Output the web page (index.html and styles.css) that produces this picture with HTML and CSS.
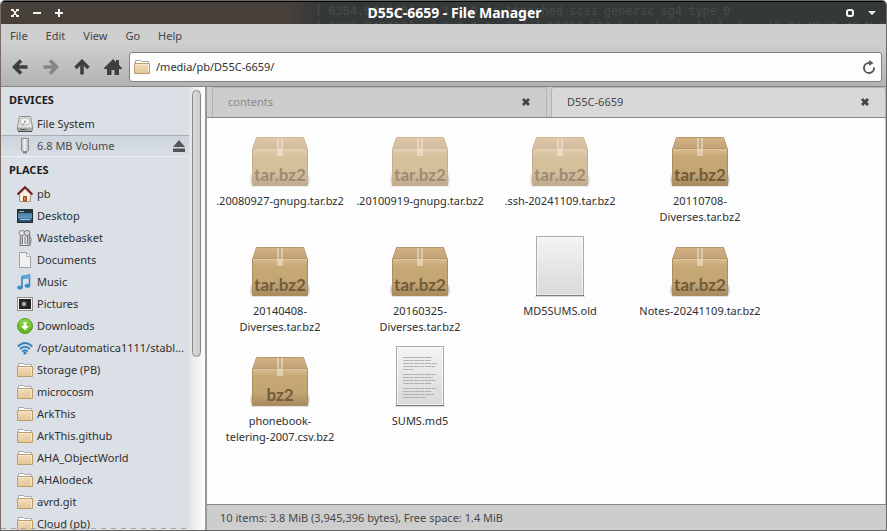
FILE: index.html
```html
<!DOCTYPE html>
<html lang="en">
<head>
<meta charset="utf-8">
<title>D55C-6659 - File Manager</title>
<link rel="stylesheet" href="styles.css">
</head>
<body>
<svg class="defs" width="0" height="0" aria-hidden="true">
  <defs>
    <linearGradient id="g-front" x1="0" y1="0" x2="0" y2="1"><stop offset="0" stop-color="#d6bb8d"/><stop offset=".2" stop-color="#c6a975"/><stop offset=".65" stop-color="#c3a572"/><stop offset="1" stop-color="#a68a5d"/></linearGradient>
    <linearGradient id="g-lid" x1="0" y1="0" x2="0" y2="1"><stop offset="0" stop-color="#d3b283"/><stop offset="1" stop-color="#c1a078"/></linearGradient>
    <linearGradient id="g-page" x1="0" y1="0" x2="0" y2="1"><stop offset="0" stop-color="#f3f3f3"/><stop offset="1" stop-color="#d9d9d9"/></linearGradient>
    <linearGradient id="g-folder" x1="0" y1="0" x2="0" y2="1"><stop offset="0" stop-color="#f0dcba"/><stop offset="1" stop-color="#e6c797"/></linearGradient>
    <linearGradient id="g-blue" x1="0" y1="0" x2="0" y2="1"><stop offset="0" stop-color="#2f6592"/><stop offset="1" stop-color="#83b7d8"/></linearGradient>
    <linearGradient id="g-green" x1="0" y1="0" x2="0" y2="1"><stop offset="0" stop-color="#8fd64c"/><stop offset="1" stop-color="#5cb01c"/></linearGradient>
    <linearGradient id="g-metal" x1="0" y1="0" x2="1" y2="0"><stop offset="0" stop-color="#a8a8a8"/><stop offset=".4" stop-color="#f4f4f4"/><stop offset="1" stop-color="#b4b4b4"/></linearGradient>
    <radialGradient id="g-shadow"><stop offset="0" stop-color="#000" stop-opacity=".4"/><stop offset="1" stop-color="#000" stop-opacity="0"/></radialGradient>
    <symbol id="box" viewBox="0 0 64 64">
      <ellipse cx="5" cy="56" rx="3.500" ry="8" fill="url(#g-shadow)"/>
      <ellipse cx="59" cy="56" rx="3.500" ry="8" fill="url(#g-shadow)"/>
      <path d="M5 62.500H59" stroke="#000" stroke-opacity=".1"/>
      <path d="M8.500 13.500H55.500L59.500 25.500H4.500Z" fill="url(#g-lid)" stroke="#b9976a"/>
      <path d="M4.500 25H59.500V61.500H4.500Z" fill="url(#g-front)" stroke="#b08d60"/>
      <path d="M5 25.500H59" stroke="#dcc59c"/>
      <path d="M32 14V25" stroke="#9c7f58"/>
      <path d="M29 14H31.500V25H32.500V14H35V32H29Z" fill="#f3e6cf" fill-opacity=".55"/>
    </symbol>
    <symbol id="page" viewBox="0 0 64 64">
      <path d="M7 62.500H57" stroke="#000" stroke-opacity=".15"/>
      <rect x="8.500" y="2.500" width="47" height="59" fill="url(#g-page)" stroke="#a9a9a9"/>
      <rect x="9.500" y="3.500" width="45" height="57" fill="none" stroke="#fff" stroke-opacity=".6"/>
      <path d="M8 61.500H56" stroke="#7e7e7e"/>
    </symbol>
    <symbol id="folder" viewBox="0 0 16 16">
      <path d="M1.500 4V1.500H6.500L7.500 2.500H14.500V5" fill="#fff" stroke="#a7abad"/>
      <path d="M.5 4.500H15.500V14.500H.5Z" fill="url(#g-folder)" stroke="#bd9d68"/>
      <path d="M1.500 5.500H14.500V13" fill="none" stroke="#f6e8cf"/>
    </symbol>
    <symbol id="close" viewBox="0 0 10 10"><path d="M2 2L8 8M8 2L2 8" stroke="#444" stroke-width="2.800"/></symbol>
  </defs>
</svg>

<div class="window">
  <header class="titlebar">
    <div class="log" aria-hidden="true">
      <div class="log-line"><span>[</span><span>6364.042940]</span><span>sd</span><span>3:0:0:1:</span><span>Attached</span><span>scsi</span><span>generic</span><span>sg4</span><span>type</span><span>0</span></div>
      <div class="log-line"><span>[</span><span>6365.345417]</span><span>sd</span><span>3:0:0:1:</span><span>[sdg]</span><span>13280</span><span>512-byte</span><span>logical</span><span>blocks:</span><span>(6.80</span><span>MB/6.48</span><span>MiB)</span></div>
    </div>
    <div class="win-buttons">
      <button aria-label="Close"><svg width="10" height="10"><path d="M1 1H4V3H6V1H9V3H7V4H6V6H7V7H9V9H6V7H4V9H1V7H3V6H4V4H3V3H1Z" fill="#f5f3f0"/></svg></button>
      <button aria-label="Minimize"><svg width="10" height="10"><path d="M1 4H9V6H1Z" fill="#f5f3f0"/></svg></button>
      <button aria-label="Maximize"><svg width="10" height="10"><path d="M4 1H6V4H9V6H6V9H4V6H1V4H4Z" fill="#f5f3f0"/></svg></button>
    </div>
    <h1>D55C-6659 - File Manager</h1>
    <div class="win-buttons">
      <button aria-label="Stick"><svg width="10" height="10"><rect x="2" y="2" width="6" height="6" rx="2" fill="none" stroke="#f5f3f0" stroke-width="2"/></svg></button>
      <button aria-label="Shade"><svg width="10" height="10"><path d="M1 3H9L5 7Z" fill="#f5f3f0"/></svg></button>
    </div>
  </header>

  <div class="chrome">
    <nav class="menubar" aria-label="Menu">
      <button>File</button><button>Edit</button><button>View</button><button>Go</button><button>Help</button>
    </nav>
    <div class="toolbar">
      <button class="tool" aria-label="Back"><svg width="16" height="16"><path d="M9 1.500L2.500 8L9 14.500M3 8H15.500" fill="none" stroke="#3f3f3f" stroke-width="3.600"/></svg></button>
      <button class="tool" aria-label="Forward" disabled><svg width="16" height="16"><path d="M7 1.500L13.500 8L7 14.500M13 8H.5" fill="none" stroke="#868686" stroke-width="3.600"/></svg></button>
      <button class="tool" aria-label="Up"><svg width="16" height="16"><path d="M1.500 9L8 2.500L14.500 9M8 3V15.500" fill="none" stroke="#3f3f3f" stroke-width="3.600"/></svg></button>
      <button class="tool" aria-label="Home"><svg width="18" height="16"><path d="M9 0L12 3V1H15V6L18 9V10H15V16H10.500V11H7.500V16H3V10H0V9Z" fill="#3f3f3f"/></svg></button>
      <div class="address">
        <svg width="16" height="16" aria-hidden="true"><use href="#folder"/></svg>
        <input type="text" aria-label="Location" value="/media/pb/D55C-6659/">
        <button aria-label="Reload"><svg width="14" height="14"><path d="M8 3H6.500A5 5 0 1 0 12 7.500" fill="none" stroke="#5a5a5a" stroke-width="2"/><path d="M7 0L11.500 3L7 6Z" fill="#5a5a5a"/></svg></button>
      </div>
    </div>
  </div>

  <div class="body">
    <aside class="sidebar">
      <div class="side-list">
        <h2>Devices</h2>
        <a href="#"><svg width="16" height="16"><path d="M2.500 .5H13.500L15.500 11V14.500H.5V11Z" fill="#e6e6e6" stroke="#8d8d8d"/><ellipse cx="8" cy="5.500" rx="4.500" ry="3.500" fill="#f6f6f6" stroke="#b3b3b3"/><circle cx="8" cy="5.500" r="1" fill="#999"/><path d="M4 10.500L8 6" stroke="#999"/><path d="M1 11.500H15V15H1Z" fill="#a5a5a5"/><path d="M1 15.500H15" stroke="#4a4a4a"/><path d="M3 13.500H9" stroke="#666"/></svg><span>File System</span></a>
        <a href="#" class="selected"><svg width="16" height="16"><path d="M4.500 .5H11.500V12L10.500 13.500H5.500L4.500 12Z" fill="url(#g-metal)" stroke="#8c8c8c"/><path d="M6 14H10V15.500H6Z" fill="#808080"/></svg><span>6.8 MB Volume</span><svg class="eject" width="12" height="12"><path d="M6 0L12 7H0ZM0 8.500H12V12H0Z" fill="#555"/></svg></a>
        <h2>Places</h2>
        <a href="#"><svg width="16" height="16"><path d="M2.500 8L8 2.500L13.500 8V15.500H2.500Z" fill="#f7eee6" stroke="#a49184"/><path d="M11 2H13V6L11 4Z" fill="#c9c4bf"/><path d="M.5 8.500L8 1.200L15.500 8.500" fill="none" stroke="#6f2320" stroke-width="2"/><path d="M6.500 15V10.500H9.500V15Z" fill="#cf7c35" stroke="#8c4a1b"/></svg><span>pb</span></a>
        <a href="#"><svg width="16" height="16"><rect x=".5" y="1.500" width="15" height="13" fill="url(#g-blue)" stroke="#222a31"/><path d="M1 2H15V5H1Z" fill="#29333c"/><path d="M2 3.500H7" stroke="#79b8df"/><path d="M1 10.500H15V14H1Z" fill="#27506e"/><path d="M3 11.500H13" stroke="#91c6e5"/></svg><span>Desktop</span></a>
        <a href="#"><svg width="16" height="16"><path d="M3.500 4H12.500L13 15.500H3Z" fill="url(#g-metal)" stroke="#777a7e"/><path d="M5.500 6V14M8 6V14M10.500 6V14" stroke="#777a7e"/><ellipse cx="5" cy="3" rx="3" ry="2.500" fill="#e7e7e7" stroke="#888"/><ellipse cx="10" cy="3" rx="3" ry="2.500" fill="#d8d8d8" stroke="#777"/><path d="M12.500 5Q15.500 9 13.500 14" fill="none" stroke="#888"/></svg><span>Wastebasket</span></a>
        <a href="#"><svg width="16" height="16"><path d="M2.500 .5H9.500L13.500 4.500V15.500H2.500Z" fill="#f1f1f1" stroke="#9fa1a3"/><path d="M9.500 .5V4.500H13.500Z" fill="#fff" stroke="#b1b3b5"/></svg><span>Documents</span></a>
        <a href="#"><svg width="16" height="16"><path d="M5 13V2.500L12.500 1V11" fill="none" stroke="#337fbd" stroke-width="1.500"/><path d="M5 1.800L13 .2V4L5 5.500Z" fill="#5aa6dc"/><ellipse cx="3" cy="13.500" rx="2.800" ry="2" fill="#3c8cca"/><ellipse cx="10.500" cy="11.800" rx="2.800" ry="2" fill="#3c8cca"/></svg><span>Music</span></a>
        <a href="#"><svg width="16" height="16"><rect x=".5" y="1.500" width="15" height="13" fill="#f5f5f5" stroke="#8e8e8e"/><rect x="2" y="3" width="12" height="10" fill="#252525"/><path d="M7 5.500V10.500M4.500 8H9.500M5.200 6.200L8.800 9.800M8.800 6.200L5.200 9.800" stroke="#c8c8c8"/></svg><span>Pictures</span></a>
        <a href="#"><svg width="16" height="16"><circle cx="8" cy="8" r="7.500" fill="url(#g-green)" stroke="#569c25"/><path d="M6.500 4H9.500V8H12L8 12.500L4 8H6.500Z" fill="#fff"/></svg><span>Downloads</span></a>
        <a href="#"><svg width="16" height="16"><path d="M.8 6.500Q8 -.5 15.200 6.500M3 9Q8 4.500 13 9M5.200 11.500Q8 9 10.800 11.500" fill="none" stroke="#2f82bf" stroke-width="2"/><circle cx="8" cy="13" r="1.600" fill="#2f82bf"/></svg><span>/opt/automatica1111/stabl...</span></a>
        <a href="#"><svg width="16" height="16"><use href="#folder"/></svg><span>Storage (PB)</span></a>
        <a href="#"><svg width="16" height="16"><use href="#folder"/></svg><span>microcosm</span></a>
        <a href="#"><svg width="16" height="16"><use href="#folder"/></svg><span>ArkThis</span></a>
        <a href="#"><svg width="16" height="16"><use href="#folder"/></svg><span>ArkThis.github</span></a>
        <a href="#"><svg width="16" height="16"><use href="#folder"/></svg><span>AHA_ObjectWorld</span></a>
        <a href="#"><svg width="16" height="16"><use href="#folder"/></svg><span>AHAlodeck</span></a>
        <a href="#"><svg width="16" height="16"><use href="#folder"/></svg><span>avrd.git</span></a>
        <a href="#"><svg width="16" height="16"><use href="#folder"/></svg><span>Cloud (pb)</span></a>
      </div>
      <div class="scrollbar"><div class="thumb"></div></div>
    </aside>

    <main class="pane">
      <div class="tabs">
        <div class="tab"><button class="tab-name">contents</button><button class="tab-close" aria-label="Close contents"><svg width="10" height="10"><use href="#close"/></svg></button></div>
        <div class="tab active"><button class="tab-name">D55C-6659</button><button class="tab-close" aria-label="Close D55C-6659"><svg width="10" height="10"><use href="#close"/></svg></button></div>
      </div>
      <ul class="files">
        <li class="hidden-file"><svg width="64" height="64"><use href="#box"/><text x="32" y="57">tar.bz2</text></svg><span>.20080927-gnupg.tar.bz2</span></li>
        <li class="hidden-file"><svg width="64" height="64"><use href="#box"/><text x="32" y="57">tar.bz2</text></svg><span>.20100919-gnupg.tar.bz2</span></li>
        <li class="hidden-file"><svg width="64" height="64"><use href="#box"/><text x="32" y="57">tar.bz2</text></svg><span>.ssh-20241109.tar.bz2</span></li>
        <li><svg width="64" height="64"><use href="#box"/><text x="32" y="57">tar.bz2</text></svg><span>20110708-<br>Diverses.tar.bz2</span></li>
        <li><svg width="64" height="64"><use href="#box"/><text x="32" y="57">tar.bz2</text></svg><span>20140408-<br>Diverses.tar.bz2</span></li>
        <li><svg width="64" height="64"><use href="#box"/><text x="32" y="57">tar.bz2</text></svg><span>20160325-<br>Diverses.tar.bz2</span></li>
        <li><svg width="64" height="64"><use href="#page"/></svg><span>MD5SUMS.old</span></li>
        <li><svg width="64" height="64"><use href="#box"/><text x="32" y="57">tar.bz2</text></svg><span>Notes-20241109.tar.bz2</span></li>
        <li><svg width="64" height="64"><use href="#box"/><text x="32" y="57">bz2</text></svg><span>phonebook-<br>telering-2007.csv.bz2</span></li>
        <li><svg width="64" height="64"><use href="#page"/><path d="M15 13.500H44M15 16.500H43M15 19.500H49M15 22.500H47M15 25.500H26M15 30.500H48M15 33.500H45M15 36.500H48M15 39.500H43M15 44.500H49M15 47.500H43M15 50.500H46M15 53.500H38" stroke="#b2b2b2" stroke-dasharray="6 .5 4 .5"/></svg><span>SUMS.md5</span></li>
      </ul>
      <footer class="status">10 items: 3.8 MiB (3,945,396 bytes), Free space: 1.4 MiB</footer>
    </main>
  </div>
</div>
</body>
</html>
```
FILE: styles.css
```css
* { box-sizing: border-box; }

body {
  margin: 0;
  background: #fff;
  color: #303030;
  font: 11px/16px "Noto Sans", sans-serif;
}

button, input {
  margin: 0;
  padding: 0;
  border: 0;
  background: none;
  color: inherit;
  font: inherit;
}

svg { display: block; flex: none; }
.defs { position: absolute; }
h1, h2, ul { margin: 0; padding: 0; }

.window {
  display: flex;
  flex-direction: column;
  height: 100vh;
  border: 1px solid #686868;
  border-left-color: #7b6a64;
  border-radius: 5px 5px 0 0;
  overflow: hidden;
}

/* title bar */
.titlebar {
  position: relative;
  display: flex;
  align-items: center;
  justify-content: space-between;
  flex: none;
  height: 23px;
  padding: 0 3px;
  border-top: 1px solid #000;
  background: linear-gradient(90deg, #48403a 0, #48403a 285px, #353839 315px);
  overflow: hidden;
}

.titlebar h1 {
  position: relative;
  color: #fff;
  font-size: 14px;
  line-height: 20px;
}

.win-buttons { position: relative; display: flex; }
.win-buttons button { width: 22px; padding: 0 6px; }

.log {
  position: absolute;
  top: 1px;
  left: 314px;
  color: #484b4c;
  font: 12px/16px "DejaVu Sans Mono", monospace;
}
.log-line { display: flex; gap: 6px; white-space: nowrap; }

/* menu and toolbar */
.chrome {
  flex: none;
  background: linear-gradient(#cfcfcf 30%, #b2b2b2);
  border-bottom: 1px solid #858585;
}

.menubar { display: flex; height: 24px; color: #454545; }
.menubar button { padding: 0 9px; }

.toolbar {
  display: flex;
  align-items: center;
  height: 38px;
  padding: 0 4px 0 3px;
}

.tool {
  display: flex;
  justify-content: center;
  width: 31px;
}

.address {
  display: flex;
  align-items: center;
  flex: 1;
  gap: 6px;
  height: 30px;
  margin-left: 1px;
  padding: 0 5px 0 4px;
  border: 1px solid #808080;
  border-radius: 3px;
  background: #fdfdfd;
}
.address input { flex: 1; min-width: 0; outline: 0; }

/* sidebar */
.body { display: flex; flex: 1; min-height: 0; }

.sidebar {
  display: flex;
  width: 206px;
  flex: none;
  border-right: 2px solid #999;
  background: #dbdfe6;
}

.side-list { position: relative; flex: 1; min-width: 0; overflow: hidden; }

/* more entries below the fold */
.side-list::after {
  content: "";
  position: absolute;
  right: 0;
  bottom: 1px;
  left: 0;
  height: 1px;
  background: repeating-linear-gradient(90deg, #a3a6ab 0 5px, transparent 5px 10px);
}

.side-list h2 {
  padding: 5px 8px;
  color: #1d1d1d;
  font-size: 11px;
  line-height: 16px;
  text-transform: uppercase;
}

.side-list a {
  display: flex;
  align-items: center;
  gap: 4px;
  height: 22px;
  padding: 0 4px 0 16px;
  color: #303030;
  text-decoration: none;
  white-space: nowrap;
}

.side-list .selected {
  border-top: 1px solid #a9adb2;
  border-bottom: 1px solid #eceef1;
  background: linear-gradient(#cbd3dc, #d9dfe6);
  color: #4a4a4a;
}
.eject { margin-left: auto; }

.scrollbar {
  width: 16px;
  flex: none;
  padding: 3px 3px;
  background: linear-gradient(90deg, #e4e4e4, #fdfdfd);
}
.thumb {
  width: 9px;
  height: 61%;
  border: 1px solid #888;
  border-radius: 5px;
  background: linear-gradient(90deg, #dcdcdc, #cacaca);
}

/* tabs and files */
.pane {
  display: flex;
  flex-direction: column;
  flex: 1;
  min-width: 0;
  background: #cdcdcd;
}

.tabs {
  display: flex;
  gap: 4px;
  flex: none;
  height: 31px;
  padding-left: 5px;
  border-bottom: 1px solid #858585;
}

.tab {
  display: flex;
  align-items: center;
  flex: 1;
  padding: 0 15px 2px;
  border: 1px solid #b2b2b2;
  border-bottom: 0;
  border-radius: 3px 3px 0 0;
  color: #8a8a8a;
}
.tab.active { background: #d8d8d8; color: #484848; }
.tab-name { flex: 1; text-align: left; }

.files {
  display: grid;
  grid-template-columns: repeat(auto-fill, 140px);
  grid-auto-rows: 110px;
  align-content: start;
  flex: 1;
  min-height: 0;
  padding: 6px 3px;
  border-right: 1px solid #c4c4c4;
  background: #fdfdfd;
  list-style: none;
  overflow: hidden;
}

.files li {
  display: flex;
  flex-direction: column;
  align-items: center;
  gap: 5px;
  text-align: center;
}

.files text {
  fill: #725c3b;
  font: bold 17px Lato, sans-serif;
  text-anchor: middle;
}
.hidden-file svg { opacity: .7; }

.status {
  flex: none;
  height: 26px;
  padding: 5px 13px;
  border-top: 1px solid #858585;
  color: #484848;
}
```
